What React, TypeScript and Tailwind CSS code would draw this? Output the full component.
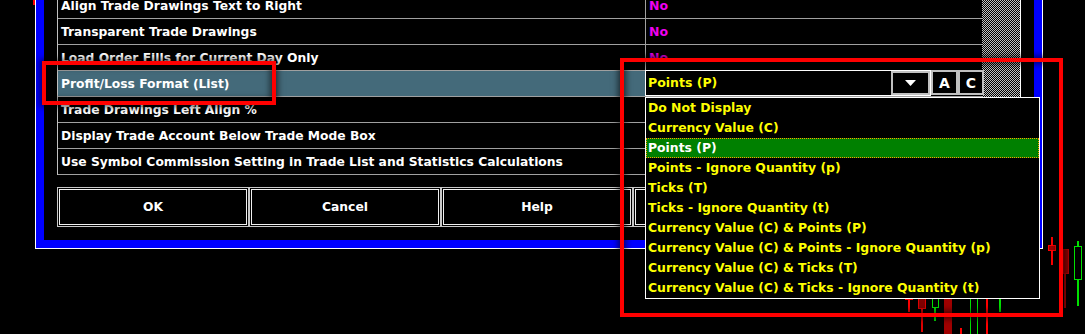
import React from "react";

const rows: { label: string; value?: string }[] = [
  { label: "Align Trade Drawings Text to Right", value: "No" },
  { label: "Transparent Trade Drawings", value: "No" },
  { label: "Load Order Fills for Current Day Only", value: "No" },
  { label: "Profit/Loss Format (List)" },
  { label: "Trade Drawings Left Align %", value: "0" },
  { label: "Display Trade Account Below Trade Mode Box", value: "No" },
  { label: "Use Symbol Commission Setting in Trade List and Statistics Calculations", value: "No" },
];

const options = [
  "Do Not Display",
  "Currency Value (C)",
  "Points (P)",
  "Points - Ignore Quantity (p)",
  "Ticks (T)",
  "Ticks - Ignore Quantity (t)",
  "Currency Value (C) & Points (P)",
  "Currency Value (C) & Points - Ignore Quantity (p)",
  "Currency Value (C) & Ticks (T)",
  "Currency Value (C) & Ticks - Ignore Quantity (t)",
];

function Chart() {
  return (
    <svg className="absolute inset-0" width={1085} height={334} viewBox="0 0 1085 334" shapeRendering="crispEdges">
      <rect x={33} y={0} width={2} height={5} fill="#ff0000" />
      {/* lower candles */}
      <rect x={905} y={298} width={8} height={2} fill="#ff0000" />
      <rect x={908} y={298} width={2} height={14} fill="#ff0000" />
      <rect x={921} y={309} width={2} height={23} fill="#e00000" />
      <rect x={918.5} y={297.5} width={7} height={11} fill="#800000" stroke="#e00000" />
      <rect x={934} y={308} width={2} height={13} fill="#00e000" />
      <rect x={932.5} y={297.5} width={6} height={10} fill="#000" stroke="#00e000" />
      <rect x={944} y={298} width={8} height={40} fill="#a00000" />
      <rect x={960} y={328} width={2} height={6} fill="#ff0000" />
      <rect x={970.5} y={297.5} width={7} height={40} fill="#000" stroke="#00e000" />
      <rect x={986} y={298} width={2} height={36} fill="#ff0000" />
      <rect x={999} y={298} width={2} height={14} fill="#00e000" />
      {/* right candles */}
      <rect x={1051} y={237} width={2} height={28} fill="#ff0000" />
      <rect x={1048.5} y={245.5} width={7} height={5} fill="#a00000" stroke="#ff0000" />
      <rect x={1064} y={249} width={2} height={59} fill="#a00000" />
      <rect x={1063.5} y={249.5} width={5} height={24} fill="#8b0000" stroke="#b00000" />
      <rect x={1077} y={241} width={2} height={65} fill="#00e000" />
      <rect x={1074.5} y={246.5} width={7} height={33} fill="#000" stroke="#00e000" />
    </svg>
  );
}

function TriangleDown() {
  return (
    <svg width="11" height="6" viewBox="0 0 11 6">
      <path d="M0 0 H11 L5.5 6 Z" fill="#ffffff" />
    </svg>
  );
}

export default function App() {
  return (
    <div className="relative w-[1085px] h-[334px] bg-black overflow-hidden font-['DejaVu_Sans',sans-serif] font-bold text-[12.3px] leading-none">
      <Chart />

      {/* dialog window */}
      <div className="absolute left-[35px] top-[-7px] w-[1008px] border-x border-b border-white">
        <div className="border-x-8 border-b-8 border-[#0000ff] bg-black px-[13px] pb-[13px]">
          <div className="w-[964px] flex flex-col">
            <div className="flex">
              <div className="w-[925px] border-l border-[#c0c0c0] flex flex-col">
                {rows.map((r, i) => {
                  const active = i === 3;
                  return (
                    <div key={i} className="h-[26px] flex border-b border-[#a0a0a0]">
                      <div
                        className={
                          "w-[587px] px-[3px] pt-px flex items-center text-white whitespace-nowrap " +
                          (active ? "bg-[#446a7a]" : "")
                        }
                      >
                        {r.label}
                      </div>
                      <div className="relative flex-1 border-l border-[#a0a0a0] pl-[3px] pt-px flex items-center text-[#f000f0] text-[12.5px]">
                        {active ? (
                          <div className="absolute left-[-1px] top-[-1px] h-[26px] flex">
                            <div className="w-[286px] h-full border border-white bg-black flex items-center justify-between">
                              <span className="pl-[2px] pt-px text-[#ffff00]">Points (P)</span>
                              <div className="w-[39px] h-full border-2 border-[#c0c0c0] bg-black flex items-center justify-center">
                                <TriangleDown />
                              </div>
                            </div>
                            <div className="w-[27px] h-[25px] border-2 border-[#c0c0c0] bg-black flex items-center justify-center text-white text-[14px]">
                              A
                            </div>
                            <div className="w-[26px] h-[25px] border-2 border-[#c0c0c0] bg-black flex items-center justify-center text-white text-[14px]">
                              C
                            </div>
                          </div>
                        ) : (
                          r.value
                        )}
                      </div>
                    </div>
                  );
                })}
              </div>
              <div className="w-[38px] bg-[repeating-conic-gradient(#c0c0c0_0%_25%,#000000_0%_50%)] bg-[length:2px_2px]" />
              <div className="w-px bg-white" />
            </div>

            <div className="h-[12px]" />

            <div className="grid grid-cols-5 w-[960px] h-[40px]">
              {["OK", "Cancel", "Help", "Apply", "Defaults"].map((b) => (
                <div key={b} className="border border-[#c8c8c8] p-px">
                  <div className="h-full border border-[#f0f0f0] pt-px flex items-center justify-center text-white">
                    {b}
                  </div>
                </div>
              ))}
            </div>
          </div>
        </div>
      </div>

      {/* dropdown list */}
      <div className="absolute left-[645px] top-[97px] w-[395px] h-[202px] border border-white bg-black flex flex-col text-[12.4px]">
        {options.map((o, i) => (
          <div
            key={o}
            className={
              "h-[20px] pl-[2px] pt-px flex items-center whitespace-nowrap " +
              (i === 2
                ? "bg-[#008000] text-white border border-dotted border-[#ff9900] pl-px"
                : "text-[#ffff00]")
            }
          >
            {o}
          </div>
        ))}
      </div>

      {/* annotation boxes */}
      <div className="absolute left-[42px] top-[61px] w-[234px] h-[44px] border-4 border-[#ff0000] shadow-[0_0_6px_2px_rgba(0,0,0,0.6),inset_0_0_6px_2px_rgba(0,0,0,0.6)]" />
      <div className="absolute left-[620px] top-[58px] w-[443px] h-[259px] border-4 border-[#ff0000] shadow-[0_0_6px_2px_rgba(0,0,0,0.6),inset_0_0_6px_2px_rgba(0,0,0,0.6)]" />
    </div>
  );
}
